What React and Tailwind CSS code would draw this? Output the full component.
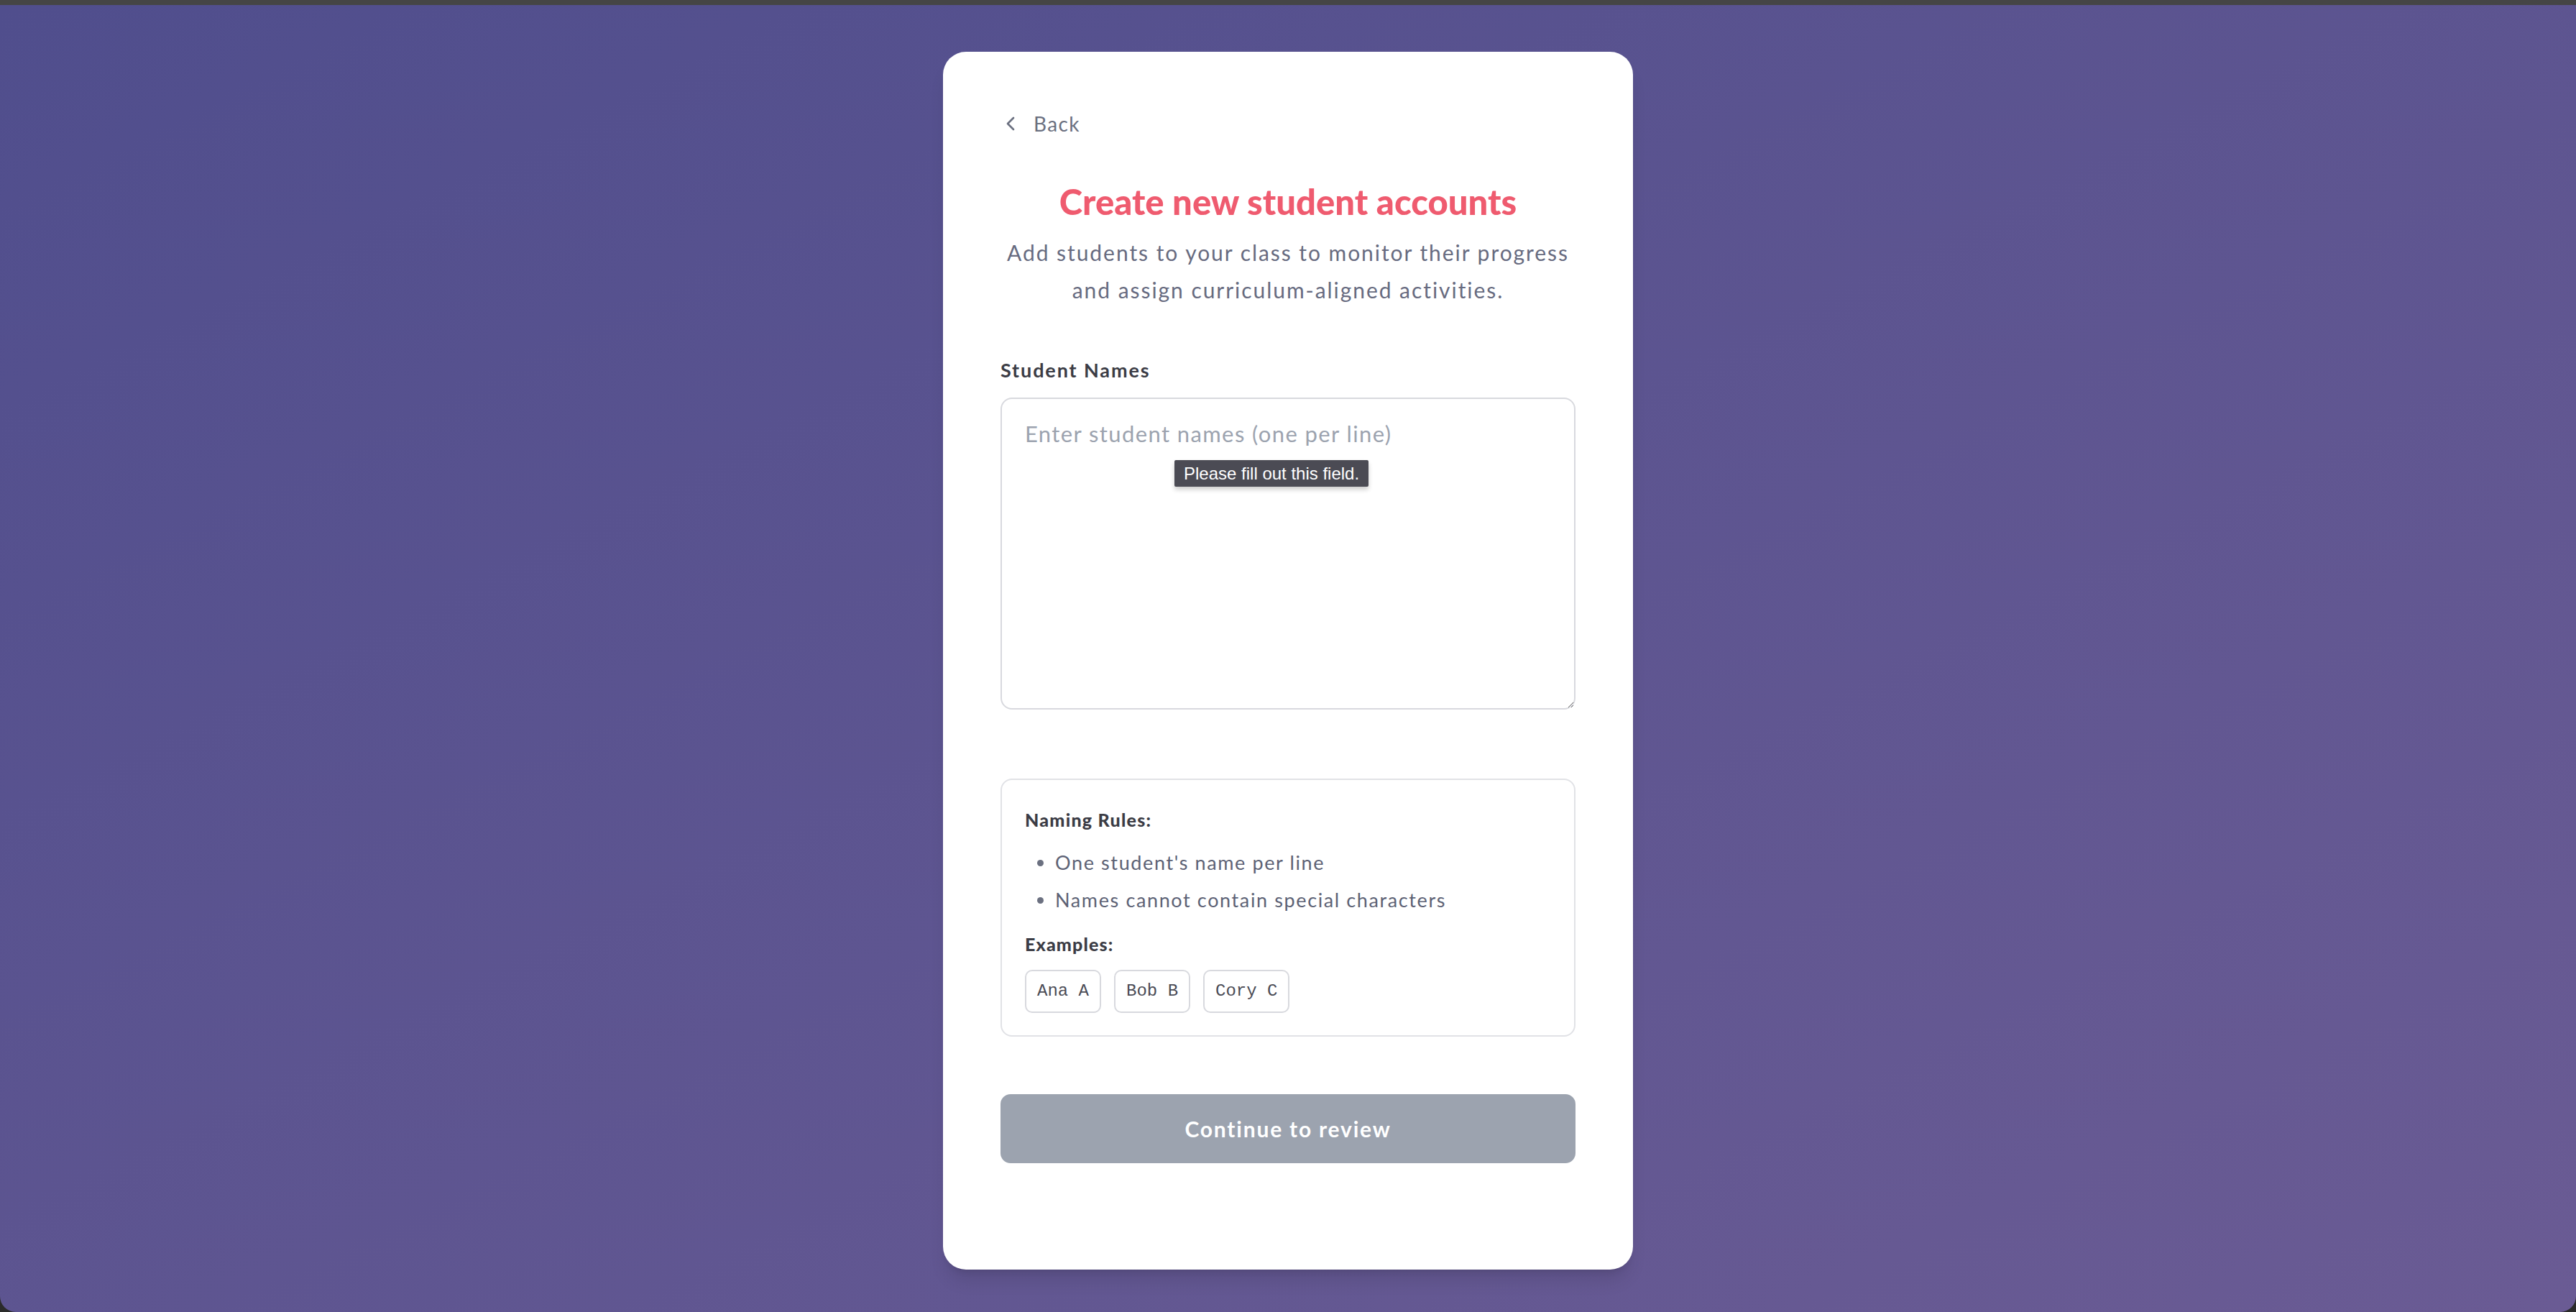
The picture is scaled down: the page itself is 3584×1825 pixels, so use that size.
import { ChevronLeft } from "lucide-react"

const examples = ["Ana A", "Bob B", "Cory C"]

function App() {
    return (
        <div className="h-[1825px] bg-[#2b2b2b] font-['Lato',sans-serif]">
            <div className="h-[7px] bg-[#454545]" />
            <div className="h-[1818px] rounded-b-[22px] bg-linear-to-br from-[#504e8d] to-[#6a5b94] flex justify-center pt-[65px]">
                <div className="w-[960px] h-[1694px] bg-white rounded-[32px] shadow-xl px-[80px] pt-[80px] pb-[144px] flex flex-col tracking-[0.055em]">
                    {/* Back link */}
                    <button className="flex items-center gap-[16px] h-[40px] text-[28px] text-[#6b7080] self-start tracking-[0.05em]">
                        <ChevronLeft size={32} strokeWidth={2} className="-ml-[2px]" />
                        <span>Back</span>
                    </button>

                    {/* Heading */}
                    <h1 className="mt-[60px] text-center text-[49px] leading-[56px] font-black tracking-normal text-[#ef5b6f]">
                        Create new student accounts
                    </h1>
                    <p className="mt-[17px] text-center text-[30px] leading-[52px] tracking-[0.065em] text-[#676b80]">
                        Add students to your class to monitor their progress
                        <br />
                        and assign curriculum-aligned activities.
                    </p>

                    {/* Student names */}
                    <label className="mt-[68px] text-[27px] leading-[36px] font-bold tracking-[0.07em] text-[#3b3c45]">
                        Student Names
                    </label>
                    <div className="relative mt-[20px]">
                        <textarea
                            required
                            placeholder="Enter student names (one per line)"
                            className="block w-full h-[434px] border-2 border-[#d8d9de] rounded-[16px] px-[32px] pt-[26px] pb-[22px] text-[31px] leading-[44px] tracking-[0.045em] text-[#3b3c45] placeholder:text-[#9ca3af] outline-none"
                        />
                        <div className="absolute left-[242px] top-[87px] h-[37px] px-[13px] flex items-center bg-[#4b4b54] text-white text-[24px] tracking-normal font-['Liberation_Sans',sans-serif] rounded-[2px] shadow-[0_4px_6px_rgba(0,0,0,0.2)]">
                            Please fill out this field.
                        </div>
                    </div>

                    {/* Naming rules */}
                    <div className="mt-[96px] border-2 border-[#e1e2e6] rounded-[16px] px-[32px] pt-[37px] pb-[31px]">
                        <p className="text-[25px] leading-[36px] font-black tracking-[0.05em] text-[#3b3c45]">Naming Rules:</p>
                        <ul className="mt-[16px] pl-[42px] list-disc text-[27px] leading-[52px] tracking-[0.06em] text-[#5d6275] marker:text-[#6b7080]">
                            <li>One student's name per line</li>
                            <li>Names cannot contain special characters</li>
                        </ul>
                        <p className="mt-[17px] text-[25px] leading-[36px] font-black tracking-[0.045em] text-[#3b3c45]">Examples:</p>
                        <div className="mt-[18px] flex gap-[18px] tracking-normal">
                            {examples.map((name) => (
                                <span
                                    key={name}
                                    className="border-2 border-[#d8d9de] rounded-[10px] px-[15px] py-[10px] text-[24px] leading-[36px] font-['Liberation_Mono',monospace] text-[#4a4b55]"
                                >
                                    {name}
                                </span>
                            ))}
                        </div>
                    </div>

                    {/* Submit */}
                    <button className="mt-[80px] h-[96px] w-full rounded-[14px] bg-[#9ca3af] text-white text-[30px] font-bold tracking-[0.06em]">
                        Continue to review
                    </button>
                </div>
            </div>
        </div>
    )
}

export default App
